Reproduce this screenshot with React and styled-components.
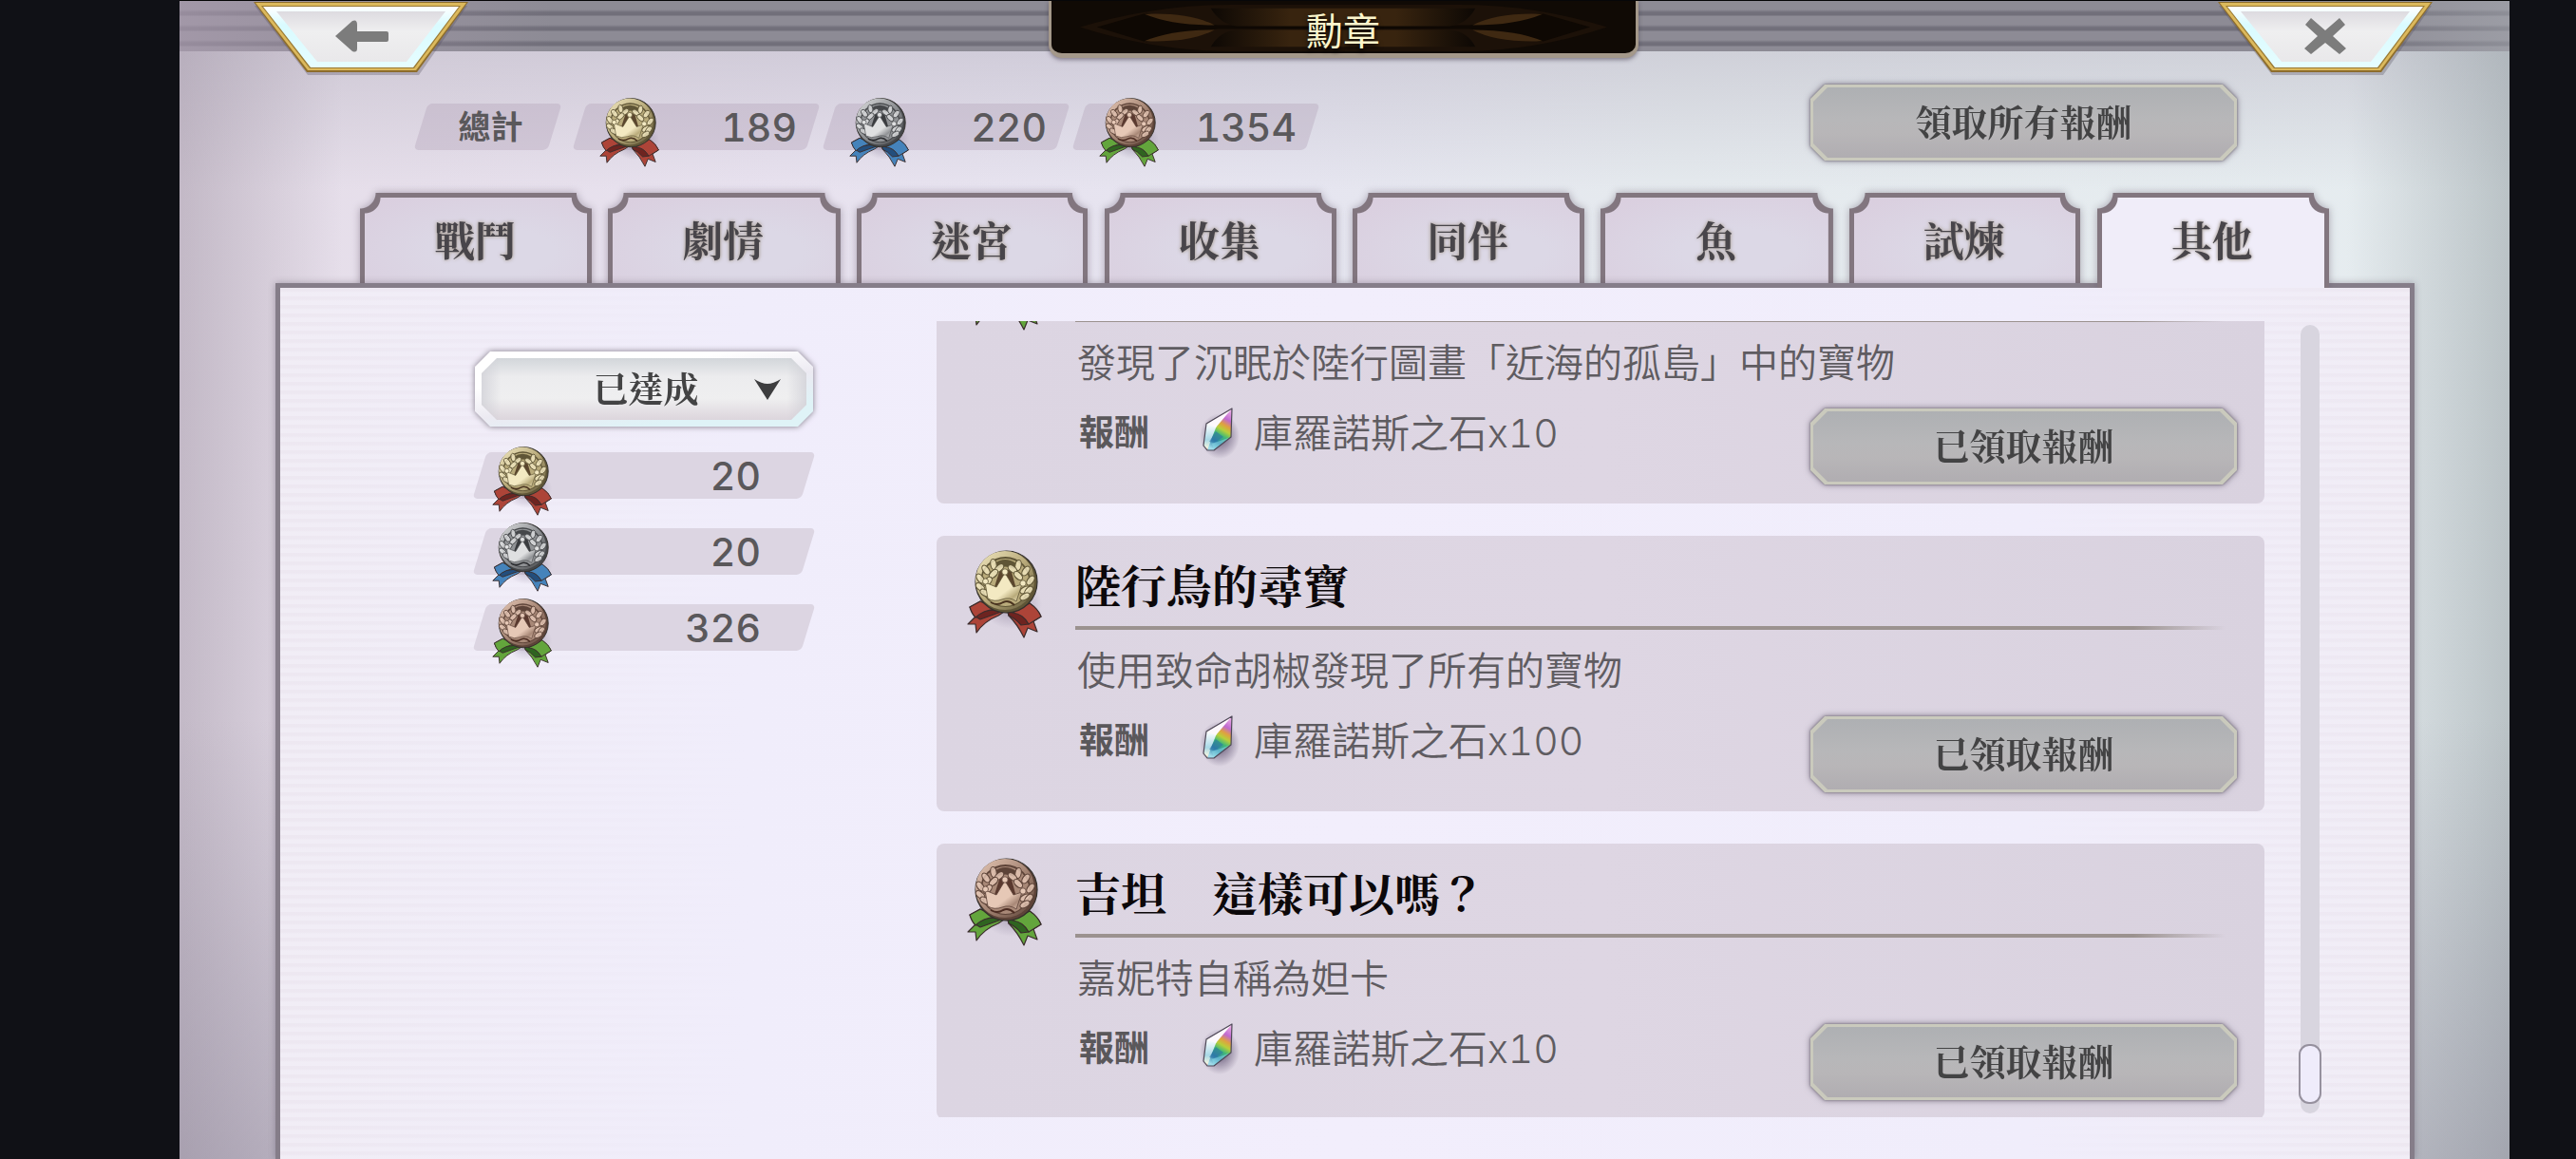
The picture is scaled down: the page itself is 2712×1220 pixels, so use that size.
import React, { useLayoutEffect, useRef, useState } from "react";
import styled, { createGlobalStyle } from "styled-components";

const SERIF = `"Noto Serif CJK TC", "Noto Sans CJK TC", serif`;
const SANS = `"Noto Sans CJK TC", sans-serif`;
const DIGITS = `Inter, "Noto Sans CJK TC", sans-serif`;

const tabs = ["戰鬥", "劇情", "迷宮", "收集", "同伴", "魚", "試煉", "其他"];

const totals = [
  { tone: "gold", count: 189 },
  { tone: "silver", count: 220 },
  { tone: "bronze", count: 1354 },
];

const achieved = [
  { tone: "gold", count: 20 },
  { tone: "silver", count: 20 },
  { tone: "bronze", count: 326 },
];

const medals = [
  {
    id: 1,
    tone: "bronze",
    title: "",
    text: "發現了沉眠於陸行圖畫「近海的孤島」中的寶物",
    reward: "庫羅諾斯之石",
    amount: "x10",
  },
  {
    id: 2,
    tone: "gold",
    title: "陸行鳥的尋寶",
    text: "使用致命胡椒發現了所有的寶物",
    reward: "庫羅諾斯之石",
    amount: "x100",
  },
  {
    id: 3,
    tone: "bronze",
    title: "吉坦　這樣可以嗎？",
    text: "嘉妮特自稱為妲卡",
    reward: "庫羅諾斯之石",
    amount: "x10",
  },
];

const tones = {
  gold: { light: "#f3e9c2", mid: "#b9ab7b", dark: "#5f5536", deep: "#4a3420", ribbon: "#ad4438", fold: "#6e2420" },
  silver: { light: "#dfe0e1", mid: "#909295", dark: "#45474a", deep: "#2c2d30", ribbon: "#4583bb", fold: "#234e7c" },
  bronze: { light: "#e6c8b6", mid: "#a88877", dark: "#5d4338", deep: "#4c2c22", ribbon: "#63a53c", fold: "#2f6420" },
};

function Medal({ tone, width, height }) {
  const c = tones[tone];
  const leaves = [
    [27, 14, -10], [33, 18, 50], [19, 20, -35], [27, 24, 45], [13, 29, -35], [21, 32, 40], [13, 38, -50], [18, 44, -60],
    [53, 15, 10], [47, 19, -50], [61, 21, 35], [53, 26, -45], [66, 31, 35], [60, 41, 60], [64, 42, 40], [60, 48, 60],
  ];
  return (
    <svg width={width} height={height} viewBox="-1 -2 80 94" preserveAspectRatio="none" aria-hidden="true">
      <defs>
        <linearGradient id={`rim-${tone}`} x1="0" y1="0" x2="1" y2="1">
          <stop offset="0" stopColor={c.light} />
          <stop offset="0.5" stopColor={c.mid} />
          <stop offset="1" stopColor={c.dark} />
        </linearGradient>
        <linearGradient id={`crown-${tone}`} x1="0" y1="0" x2="1" y2="1">
          <stop offset="0" stopColor={c.light} />
          <stop offset="0.6" stopColor={c.light} />
          <stop offset="0.8" stopColor={c.mid} />
          <stop offset="1" stopColor={c.light} />
        </linearGradient>
        <radialGradient id="medal-shade">
          <stop offset="0" stopColor="#6d6080" stopOpacity="0.5" />
          <stop offset="1" stopColor="#6d6080" stopOpacity="0" />
        </radialGradient>
      </defs>
      <ellipse cx="46" cy="56" rx="32" ry="26" fill="url(#medal-shade)" />
      <g fill={c.ribbon} stroke="#3a2c2c" strokeWidth="1.2" strokeLinejoin="round">
        <path d="M13 53 L2 59 Q4 65 8 69 L0 77 L8 77 L9 86 Q17 74 32 68 L38 64 Z" />
        <path d="M65 55 Q73 61 77 69 L69 74 L73 85 L63 81 L59 91 Q52 77 43 68 L42 64 Z" />
        <path d="M8 69 Q14 60 38 63 L24 68 L13 72 Z" fill={c.fold} />
        <path d="M42 64 Q58 64 64 77 L56 78 Q50 71 43 68 Z" fill={c.fold} />
        <path d="M13 53 L2 59 Q4 66 8 70 Q16 62 30 61 Z" />
        <path d="M65 55 Q74 61 77 69 L64 77 Q58 66 47 65 Z" />
      </g>
      <circle cx="40.5" cy="32.5" r="32.5" fill={c.dark} stroke="#33302c" strokeWidth="1.2" />
      <circle cx="39" cy="31" r="31" fill={`url(#rim-${tone})`} />
      <circle cx="39.5" cy="32.5" r="26.5" fill={c.dark} />
      <circle cx="39.5" cy="33" r="25" fill={c.mid} />
      <path d="M28 13 Q39 5 51 13 L49 19 Q39 14 30 19 Z" fill={c.dark} />
      <path d="M33 22 Q39 16 46 22 L52 44 L26 44 Z" fill={c.deep} opacity="0.85" />
      {leaves.map(([x, y, turn]) => (
        <ellipse
          key={`${x}-${y}`}
          cx={x}
          cy={y}
          rx="3.2"
          ry="5.6"
          transform={`rotate(${turn} ${x} ${y})`}
          fill={c.light}
          fillOpacity="0.8"
          stroke={c.dark}
          strokeWidth="1.1"
        />
      ))}
      <path
        d="M21 50 L18 33 L30 38 L39 23 L48 38 L57 35 L51 53 Q44 48 36 51 Q28 54 21 50 Z"
        fill={`url(#crown-${tone})`}
        stroke={c.dark}
        strokeWidth="0.8"
        strokeLinejoin="round"
      />
      <path d="M24 54 Q31 58 37 54 Q43 51 49 57" fill="none" stroke={c.deep} strokeWidth="2" />
      <g fill={c.light} stroke={c.dark} strokeWidth="0.8">
        <circle cx="18.5" cy="32" r="3" />
        <circle cx="39" cy="22" r="3.2" />
        <circle cx="58" cy="34" r="3.2" />
      </g>
    </svg>
  );
}

function Gem() {
  return (
    <svg width="54" height="60" viewBox="-10 -4 54 60" aria-hidden="true">
      <defs>
        <radialGradient id="gem-shade">
          <stop offset="0.4" stopColor="#5d5070" stopOpacity="0.6" />
          <stop offset="1" stopColor="#5d5070" stopOpacity="0" />
        </radialGradient>
        <linearGradient id="gem-face" x1="0.8" y1="0" x2="0.4" y2="1">
          <stop offset="0" stopColor="#e9a8e4" />
          <stop offset="0.22" stopColor="#c06ad0" />
          <stop offset="0.36" stopColor="#e0a040" />
          <stop offset="0.48" stopColor="#b8cf3a" />
          <stop offset="0.62" stopColor="#3fb878" />
          <stop offset="0.8" stopColor="#2f86ac" />
          <stop offset="1" stopColor="#9fdcea" />
        </linearGradient>
        <linearGradient id="gem-side" x1="0" y1="0" x2="0" y2="1">
          <stop offset="0" stopColor="#ffffff" />
          <stop offset="0.6" stopColor="#a8d8e6" />
          <stop offset="0.9" stopColor="#f0f4e0" />
          <stop offset="1" stopColor="#e8907c" />
        </linearGradient>
      </defs>
      <ellipse cx="18" cy="29" rx="21" ry="24" fill="url(#gem-shade)" />
      <path d="M31 0 L30 30 L12 44 L5 44 L1 39 L4 16 Z" fill="url(#gem-face)" />
      <path d="M4 16 L15 18 L9 33 L5 44 L1 39 Z" fill="url(#gem-side)" />
      <path d="M31 0 L4 16 L14 20 Z" fill="#fdf8fc" />
      <path d="M14 24 L22 30 L12 36 L7 35 Z" fill="#2c6fa4" opacity="0.55" />
      <path d="M10 37 L30 30 L12 44 Z" fill="#8fe0ea" opacity="0.5" />
      <path d="M31 0 L30 30 L12 44 L5 44 L1 39 L4 16 Z" fill="none" stroke="#4f4858" strokeWidth="1.2" strokeLinejoin="round" />
    </svg>
  );
}

function CornerShape({ children }) {
  return (
    <svg viewBox="0 0 228 84" width="228" height="84" aria-hidden="true">
      <defs>
        <linearGradient id="corner-fill" x1="0" y1="0" x2="0" y2="1">
          <stop offset="0" stopColor="#dddbe0" />
          <stop offset="0.4" stopColor="#efeff0" />
          <stop offset="1" stopColor="#e9e8ea" />
        </linearGradient>
        <linearGradient id="corner-bevel" x1="0" y1="0" x2="0" y2="1">
          <stop offset="0" stopColor="#ffffff" />
          <stop offset="0.3" stopColor="#d9fbff" />
          <stop offset="1" stopColor="#e6fdff" />
        </linearGradient>
      </defs>
      <path d="M2 6 L226 6 L175 79 L58 79 Z" fill="#504858" opacity="0.3" />
      <path d="M1 2 L227 2 L173 76 L57 76 Z" fill="#8d6d2c" />
      <path d="M3 3 L225 3 L172 74 L58 74 Z" fill="#dcb95c" />
      <path d="M9 6 L219 6 L170 72 L60 72 Z" fill="#9a7a34" />
      <path d="M11 7 L217 7 L169 71 L61 71 Z" fill="url(#corner-bevel)" />
      <path d="M25 12 L203 12 L162 65 L68 65 Z" fill="url(#corner-fill)" />
      {children}
    </svg>
  );
}

function TitleOrnament() {
  return (
    <svg viewBox="0 0 616 56" preserveAspectRatio="none" aria-hidden="true">
      <defs>
        <linearGradient id="plate-brown" x1="0" y1="0" x2="1" y2="0">
          <stop offset="0" stopColor="#0d0804" />
          <stop offset="0.3" stopColor="#38240f" />
          <stop offset="0.7" stopColor="#38240f" />
          <stop offset="1" stopColor="#0d0804" />
        </linearGradient>
      </defs>
      <path d="M30 28 Q110 4 190 4 L430 4 Q510 4 586 28 Q510 54 430 54 L190 54 Q110 54 30 28 Z" fill="#1c1108" />
      <path d="M48 28 L100 13 Q130 20 175 26 L441 26 Q486 20 516 13 L568 28 L516 44 Q486 36 441 30 L175 30 Q130 36 100 44 Z" fill="#0e0803" />
      <path d="M168 8 L447 8 Q438 25 420 27 L195 27 Q178 25 168 8 Z" fill="url(#plate-brown)" />
      <path d="M168 49 L447 49 Q438 32 420 31 L195 31 Q178 32 168 49 Z" fill="url(#plate-brown)" />
      <g fill="#3f2912">
        <path d="M98 14 Q146 12 172 26 Q126 26 98 14 Z" />
        <path d="M98 43 Q146 45 172 31 Q126 31 98 43 Z" />
        <path d="M518 14 Q470 12 444 26 Q490 26 518 14 Z" />
        <path d="M518 43 Q470 45 444 31 Q490 31 518 43 Z" />
      </g>
    </svg>
  );
}

function MedalCard({ medal }) {
  return (
    <Card>
      <Medal tone={medal.tone} width={80} height={94} />
      <CardBody>
        <CardTitle>{medal.title}</CardTitle>
        <Rule />
        <CardText>{medal.text}</CardText>
        <CardFooter>
          <RewardLabel>報酬</RewardLabel>
          <Gem />
          <Reward>
            {medal.reward}
            <span>{medal.amount}</span>
          </Reward>
          <PlateButton type="button" disabled>
            已領取報酬
          </PlateButton>
        </CardFooter>
      </CardBody>
    </Card>
  );
}

function App() {
  const [active, setActive] = useState("其他");
  const [filter, setFilter] = useState("done");
  const listRef = useRef(null);

  useLayoutEffect(() => {
    listRef.current.scrollTop = 98;
  }, []);

  return (
    <Stage>
      <GlobalStyle />
      <Header>
        <CornerButton type="button" aria-label="back">
          <CornerShape>
            <path d="M87 38 L105 22 Q110 20 110 26 L110 33 L141 33 Q143 33 143 35 L143 42 Q143 44 141 44 L110 44 L110 51 Q110 56 105 54 Z" fill="#7c7c7c" />
          </CornerShape>
        </CornerButton>
        <TitlePlate>
          <TitleOrnament />
          <h1>勳章</h1>
        </TitlePlate>
        <CornerButton type="button" aria-label="close">
          <CornerShape>
            <path d="M99 19 L114 32 L129 19 L135 26 L122 38 L136 51 L129 57 L114 45 L99 57 L92 51 L106 38 L93 26 Z" fill="#7c7c7c" />
          </CornerShape>
        </CornerButton>
      </Header>

      <Summary>
        <TotalLabel>總計</TotalLabel>
        <Chips>
          {totals.map((item) => (
            <Chip key={item.tone}>
              <Medal tone={item.tone} width={64} height={74} />
              <Count>{item.count}</Count>
            </Chip>
          ))}
        </Chips>
        <PlateButton type="button" disabled>
          領取所有報酬
        </PlateButton>
      </Summary>

      <Tabs role="tablist">
        {tabs.map((name) => (
          <Tab
            key={name}
            type="button"
            role="tab"
            aria-selected={active === name}
            $active={active === name}
            onClick={() => setActive(name)}
          >
            {name}
          </Tab>
        ))}
      </Tabs>

      <Panel>
        <Sidebar>
          <FilterBox>
            <select aria-label="篩選" value={filter} onChange={(e) => setFilter(e.target.value)}>
              <option value="done">已達成</option>
            </select>
            <svg width="28" height="22" viewBox="0 0 28 22" aria-hidden="true">
              <path d="M0 0 Q8 5 14 5 Q20 5 28 0 L14 22 Z" fill="#3d3d3f" />
            </svg>
          </FilterBox>
          {achieved.map((item) => (
            <Chip key={item.tone} $wide>
              <Medal tone={item.tone} width={64} height={74} />
              <Count>{item.count}</Count>
            </Chip>
          ))}
        </Sidebar>
        <List ref={listRef}>
          {medals.map((medal) => (
            <MedalCard key={medal.id} medal={medal} />
          ))}
        </List>
        <ScrollTrack>
          <ScrollThumb />
        </ScrollTrack>
      </Panel>
    </Stage>
  );
}

export default App;

const GlobalStyle = createGlobalStyle`
  * {
    box-sizing: border-box;
  }

  body {
    margin: 0;
    background: #101116;
  }

  button,
  select {
    border: none;
    padding: 0;
    background: none;
    cursor: pointer;
  }

  h1,
  h2,
  p {
    margin: 0;
  }

  svg {
    display: block;
    flex: none;
  }
`;

const Stage = styled.div`
  height: 100vh;
  margin: 0 70px 0 189px;
  display: flex;
  flex-direction: column;
  overflow: hidden;
  font-family: ${SANS};
  color: #5a585b;
  background:
    linear-gradient(0deg, rgba(128, 122, 140, 0.4), transparent 38%),
    linear-gradient(90deg, rgba(160, 148, 164, 0.5), transparent 7%, transparent 93%, rgba(150, 160, 164, 0.55)),
    linear-gradient(180deg, rgba(180, 176, 190, 0.45) 50px, transparent 200px),
    linear-gradient(100deg, #e5dde8 0%, #e8e2ef 25%, #e6e5f0 45%, #e5eaee 60%, #e6edf0 100%);
`;

const Header = styled.header`
  height: 54px;
  flex: none;
  padding: 0 80px 0 77px;
  display: flex;
  justify-content: space-between;
  align-items: flex-start;
  border-top: 1px solid #050506;
  background:
    linear-gradient(90deg, rgba(176, 160, 180, 0.6), transparent 16%, transparent 92%, rgba(170, 174, 180, 0.5)),
    repeating-linear-gradient(180deg, #8d8b95 0 9px, #716f7a 12px 15px, #8d8b95 16px);
`;

const CornerButton = styled.button`
  height: 84px;
  margin-top: -1px;
`;

const TitlePlate = styled.div`
  width: 621px;
  height: 60px;
  display: grid;
  border: 3px solid #a4988a;
  border-top: none;
  border-bottom-width: 5px;
  border-radius: 0 0 14px 14px;
  background: #100a05;
  box-shadow: 0 2px 4px rgba(60, 50, 70, 0.5);

  svg,
  h1 {
    grid-area: 1 / 1;
    width: 100%;
    height: 55px;
  }

  h1 {
    z-index: 1;
    text-align: center;
    font-size: 39px;
    line-height: 58px;
    font-weight: 400;
    color: #fcf6cc;
    text-shadow: 0 3px 5px #000;
  }
`;

const Summary = styled.section`
  flex: none;
  padding: 35px 287px 0 247px;
  height: 149px;
  display: flex;
  align-items: flex-start;
`;

const Slanted = styled.div`
  position: relative;
  margin-top: 20px;
  height: 49px;
  display: flex;
  align-items: center;
  isolation: isolate;

  &::before {
    content: "";
    position: absolute;
    inset: 0 7px;
    z-index: -1;
    border-radius: 5px;
    background: rgba(178, 160, 182, 0.36);
    transform: skewX(-17deg);
  }
`;

const TotalLabel = styled(Slanted)`
  width: 155px;
  margin-right: 12px;
  padding: 0 0 4px 6px;
  justify-content: center;
  font-size: 34px;
  font-weight: 700;
`;

const Chips = styled.div`
  flex: 1;
  display: flex;
  gap: 3px;
`;

const Chip = styled(Slanted)`
  width: ${(p) => (p.$wide ? "auto" : "260px")};
  margin-top: ${(p) => (p.$wide ? "0" : "20px")};
  padding: ${(p) => (p.$wide ? "0 57px 0 20px" : "0 24px 0 28px")};
  justify-content: space-between;

  &::before {
    background: ${(p) => (p.$wide ? "#dcd5e2" : "rgba(178, 160, 182, 0.36)")};
  }

  svg {
    margin-top: 10px;
  }
`;

const Count = styled.span`
  font-family: ${DIGITS};
  font-size: 41px;
  line-height: 49px;
  font-weight: 500;
  font-variant-numeric: tabular-nums;
  padding-top: 2px;
`;

const PlateButton = styled.button`
  position: relative;
  width: 449px;
  height: 80px;
  flex: none;
  margin-left: auto;
  padding-bottom: 5px;
  font-family: ${SERIF};
  font-size: 38px;
  font-weight: 700;
  color: #434344;
  filter: drop-shadow(0 0 1px #77717c) drop-shadow(0 0 3px rgba(70, 60, 80, 0.6));

  &::before,
  &::after {
    content: "";
    position: absolute;
    inset: 0;
    z-index: -2;
    background: #cacabd;
    clip-path: polygon(15px 0, calc(100% - 15px) 0, 100% 15px, 100% calc(100% - 15px), calc(100% - 15px) 100%, 15px 100%, 0 calc(100% - 15px), 0 15px);
  }

  &::after {
    inset: 3px;
    z-index: -1;
    background: linear-gradient(180deg, #aeb0b3, #b7b7b9 45%, #b8b6b8 65%, #b0adb1);
  }
`;

const Tabs = styled.div`
  flex: none;
  height: 100px;
  margin-bottom: -5px;
  padding: 0 190px;
  display: flex;
  gap: 17px;
`;

const Tab = styled.button`
  flex: 1;
  position: relative;
  z-index: ${(p) => (p.$active ? 3 : 1)};
  padding: 0 2px 3px 0;
  font-family: ${SERIF};
  font-size: 43px;
  font-weight: 700;
  color: #48454a;
  text-shadow: 0 0 4px #a89f98, 0 0 3px #c9c0b8;
  filter: drop-shadow(0 0 4px rgba(90, 80, 100, 0.45));
  clip-path: inset(-14px -14px 0 -14px);

  &::before,
  &::after {
    content: "";
    position: absolute;
    inset: 0;
    z-index: -2;
    background: #82767f;
    mask:
      radial-gradient(circle at 0 0, transparent 16px, #000 17px) left / 51% 100% no-repeat,
      radial-gradient(circle at 100% 0, transparent 16px, #000 17px) right / 51% 100% no-repeat;
  }

  &::after {
    inset: 5px 5px 0;
    z-index: -1;
    background: ${(p) =>
      p.$active
        ? "#f0edf9"
        : "radial-gradient(ellipse at 60% 60%, #dcd8e6 30%, #dacfdf 90%)"};
  }
`;

const Panel = styled.main`
  flex: 1;
  min-height: 0;
  position: relative;
  z-index: 2;
  margin: 0 100px 0 101px;
  padding: 35px 93px 44px 203px;
  display: flex;
  border: 5px solid #857d89;
  border-bottom: none;
  background:
    linear-gradient(90deg, rgba(241, 238, 252, 0.2), #f0edfb 22%, #f2eefc 50%, #f0edfb 82%, rgba(241, 238, 252, 0.2)),
    repeating-linear-gradient(180deg, #ece6ee 0 3px, #f1edf4 5px 9px);
  box-shadow: 0 0 7px rgba(90, 80, 100, 0.45);
`;

const Sidebar = styled.aside`
  width: 360px;
  flex: none;
  margin: 32px 128px 0 0;
  display: flex;
  flex-direction: column;
  gap: 31px;
`;

const FilterBox = styled.div`
  position: relative;
  height: 79px;
  margin: 0 2px -4px;
  filter: drop-shadow(0 0 3px #807986);
  isolation: isolate;

  &::before,
  &::after {
    content: "";
    position: absolute;
    inset: 0;
    z-index: -2;
    background: linear-gradient(172deg, #ffffff 30%, #eceaf2 55%, #dff3f7 80%);
    clip-path: polygon(16px 0, calc(100% - 16px) 0, 100% 16px, 100% calc(100% - 16px), calc(100% - 16px) 100%, 16px 100%, 0 calc(100% - 16px), 0 16px);
  }

  &::after {
    inset: 7px;
    z-index: -1;
    background:
      linear-gradient(90deg, rgba(205, 205, 212, 0.7), transparent 6%, transparent 94%, rgba(205, 205, 212, 0.7)),
      linear-gradient(180deg, #d2d6da, #ececee 30%, #efeff0 65%, #dcd5dc);
  }

  select {
    width: 100%;
    height: 100%;
    padding: 0 0 3px 4px;
    appearance: none;
    text-align: center;
    text-align-last: center;
    font-family: ${SERIF};
    font-size: 37px;
    font-weight: 700;
    color: #434344;
  }

  svg {
    position: absolute;
    right: 34px;
    top: 29px;
    pointer-events: none;
  }
`;

const List = styled.div`
  flex: 1;
  min-width: 0;
  display: flex;
  flex-direction: column;
  gap: 34px;
  overflow-y: auto;
  scrollbar-width: none;
`;

const Card = styled.article`
  flex: none;
  height: 290px;
  padding: 0 29px 0 32px;
  display: flex;
  gap: 34px;
  border-radius: 8px;
  background: linear-gradient(90deg, #dcd5e2, #ded6e3 50%, #d9d2df);

  > svg {
    margin-top: 14px;
  }
`;

const CardBody = styled.div`
  flex: 1;
  min-width: 0;
`;

const CardTitle = styled.h2`
  height: 95px;
  padding-top: 11px;
  font-family: ${SERIF};
  font-size: 48px;
  line-height: 80px;
  font-weight: 700;
  color: #0c080a;
`;

const Rule = styled.div`
  height: 4px;
  margin-right: 12px;
  background: linear-gradient(90deg, #9b928f 92%, transparent);
`;

const CardText = styled.p`
  height: 83px;
  padding-left: 2px;
  font-size: 41px;
  line-height: 80px;
  font-weight: 350;
  color: #5f5c61;
`;

const CardFooter = styled.div`
  display: flex;
  align-items: flex-start;

  > svg {
    margin: 4px 10px 0 46px;
  }

  ${PlateButton} {
    margin-top: 8px;
  }
`;

const RewardLabel = styled.span`
  padding-left: 4px;
  font-size: 37px;
  line-height: 62px;
  font-weight: 700;
`;

const Reward = styled.span`
  font-size: 41px;
  line-height: 62px;
  font-weight: 350;
  color: #5f5c61;

  span {
    font-family: ${DIGITS};
    font-weight: 300;
    font-variant-numeric: tabular-nums;
  }
`;

const ScrollTrack = styled.div`
  width: 20px;
  margin: 4px 2px 4px 38px;
  padding-bottom: 10px;
  display: flex;
  align-items: flex-end;
  justify-content: center;
  border-radius: 10px;
  background: #d8d5df;
`;

const ScrollThumb = styled.div`
  width: 24px;
  height: 63px;
  flex: none;
  border: 2px solid #96919e;
  border-radius: 11px;
  background: #efecfb;
`;
